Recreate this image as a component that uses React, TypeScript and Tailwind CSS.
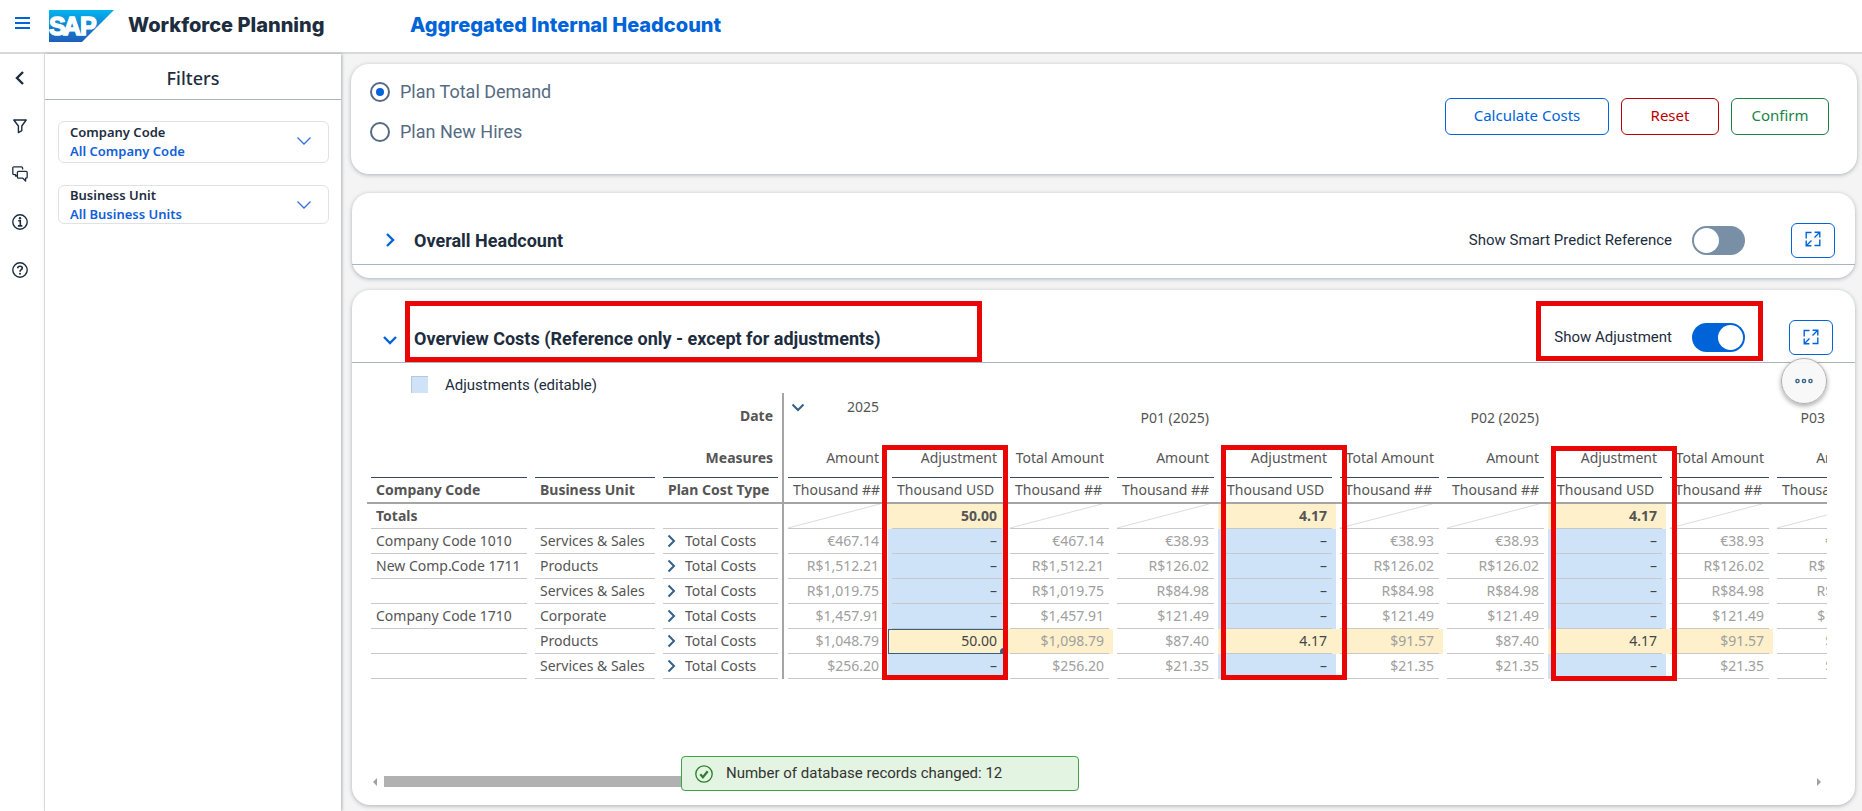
import React, { useState } from "react";

const ROBOTO = "font-[Roboto,'Liberation_Sans',sans-serif]";

type Tone = "none" | "blue" | "yellow" | "selected";

const periods = [
  { label: "2025", expandable: true },
  { label: "P01 (2025)", expandable: false },
  { label: "P02 (2025)", expandable: false },
  { label: "P03 (2025)", expandable: false },
];

const rows = [
  { company: "Company Code 1010", unit: "Services & Sales", year: ["€467.14", "–", "€467.14"], month: ["€38.93", "–", "€38.93"] },
  { company: "New Comp.Code 1711", unit: "Products", year: ["R$1,512.21", "–", "R$1,512.21"], month: ["R$126.02", "–", "R$126.02"] },
  { company: "", unit: "Services & Sales", year: ["R$1,019.75", "–", "R$1,019.75"], month: ["R$84.98", "–", "R$84.98"] },
  { company: "Company Code 1710", unit: "Corporate", year: ["$1,457.91", "–", "$1,457.91"], month: ["$121.49", "–", "$121.49"] },
  { company: "", unit: "Products", year: ["$1,048.79", "50.00", "$1,098.79"], month: ["$87.40", "4.17", "$91.57"], changed: true },
  { company: "", unit: "Services & Sales", year: ["$256.20", "–", "$256.20"], month: ["$21.35", "–", "$21.35"] },
];

const measures = [
  { name: "Amount", unit: "Thousand ##" },
  { name: "Adjustment", unit: "Thousand USD" },
  { name: "Total Amount", unit: "Thousand ##" },
];

// Every period shows three measures; the last one only shows its first.
const valueColumns = periods.flatMap((_, p) =>
  (p === 3 ? [0] : [0, 1, 2]).map((m) => ({ p, m })),
);

const colWidths = [
  "w-[164px]", "w-[128px]", "w-[123px]",
  "w-[106px]", "w-[118px]", "w-[107px]",
  "w-[105px]", "w-[118px]", "w-[107px]",
  "w-[105px]", "w-[118px]", "w-[107px]",
  "w-[105px]",
];

function Chevron({ className, d, width = 2 }: { className: string; d: string; width?: number }) {
  return (
    <svg viewBox="0 0 16 16" className={className} fill="none" stroke="currentColor" strokeWidth={width} aria-hidden="true">
      <path d={d} />
    </svg>
  );
}

function SapLogo() {
  return (
    <svg viewBox="0 0 65 32" className="h-8 w-[65px] shrink-0" role="img" aria-label="SAP">
      <defs>
        <linearGradient id="sap" x1="0" y1="0" x2="0" y2="1">
          <stop offset="0" stopColor="#00b4f0" />
          <stop offset="0.5" stopColor="#1482d0" />
          <stop offset="1" stopColor="#1e5fbb" />
        </linearGradient>
      </defs>
      <path d="M0 0H65L33 32H0Z" fill="url(#sap)" />
      <text x="0" y="25" fontFamily="Liberation Sans, sans-serif" fontWeight="700" fontSize="25" fill="#fff" stroke="#fff" strokeWidth="1.4">
        <tspan x="0">S</tspan>
        <tspan x="14">A</tspan>
        <tspan x="31">P</tspan>
      </text>
    </svg>
  );
}

function Rail() {
  const button = "flex size-6 items-center justify-center text-[#1d2d3e]";
  return (
    <nav className="flex w-[45px] shrink-0 flex-col items-center gap-6 border-r border-[#e2e4e6] bg-white pt-3 pr-1">
      <button className={button} aria-label="Collapse">
        <Chevron className="size-4" d="M11 2 5 8l6 6" width={2.4} />
      </button>
      <button className={button} aria-label="Filter">
        <svg viewBox="0 0 16 16" className="size-4" fill="none" stroke="currentColor" strokeWidth="1.4" strokeLinejoin="round">
          <path d="M1.8 2h12.4L9.8 8v4.6L6.4 14.6V8Z" />
        </svg>
      </button>
      <button className={button} aria-label="Comments">
        <svg viewBox="0 0 16 16" className="size-4" fill="none" stroke="currentColor" strokeWidth="1.3" strokeLinejoin="round">
          <path d="M3.6 10.4V8.6H2Q.8 8.600.8 7.400V2Q.8.8 2 .8H9.400Q10.600.8 10.600 2V3.400" />
          <path d="M3.600 10.600 5.200 9.300" />
          <path d="M6.600 5.400H14Q15.200 5.400 15.200 6.600V11Q15.200 12.200 14 12.200H13.600V15L10.800 12.200H6.600Q5.400 12.200 5.400 11V6.600Q5.400 5.400 6.600 5.400Z" />
        </svg>
      </button>
      <button className={button} aria-label="Information">
        <svg viewBox="0 0 16 16" className="size-4" fill="none" stroke="currentColor" strokeWidth="1.4">
          <circle cx="8" cy="8" r="7.200" />
          <path d="M6.200 6.800H8.300V11.600M5.900 11.900H10.300" strokeWidth="1.600" />
          <circle cx="8" cy="4.300" r="1.200" fill="currentColor" stroke="none" />
        </svg>
      </button>
      <button className={button} aria-label="Help">
        <svg viewBox="0 0 16 16" className="size-4" fill="none" stroke="currentColor" strokeWidth="1.4">
          <circle cx="8" cy="8" r="7.200" />
          <path d="M5.700 6.300Q5.700 4.200 8 4.200T10.300 6.100Q10.300 7.200 9 7.900Q8 8.500 8 9.700" strokeWidth="1.600" />
          <circle cx="8" cy="11.800" r="1" fill="currentColor" stroke="none" />
        </svg>
      </button>
    </nav>
  );
}

function FilterTile({ id, label, value, height }: { id: string; label: string; value: string; height: string }) {
  return (
    <div className={`relative flex flex-col justify-center rounded-md border border-[#e0e2e4] pl-[11px] text-[13px] leading-[19px] font-semibold ${height}`}>
      <label htmlFor={id} className="text-[#1d2d3e]">{label}</label>
      <select id={id} className="h-[19px] appearance-none bg-transparent leading-[19px] font-semibold text-[#1160d8] outline-none">
        <option>{value}</option>
      </select>
      <Chevron className="pointer-events-none absolute top-[11px] right-4 size-4 text-[#2f6fe0]" d="M1.500 4.500 8 11l6.500-6.500" width={1.3} />
    </div>
  );
}

function Toggle({ label, checked, onChange }: { label: string; checked: boolean; onChange: () => void }) {
  return (
    <label className={`flex cursor-pointer items-center gap-5 text-[15px] text-[#1d2d3e] ${ROBOTO}`}>
      {label}
      <input type="checkbox" role="switch" checked={checked} onChange={onChange} className="peer sr-only" />
      <span className="flex h-[29px] w-[53px] items-center rounded-full bg-[#788fa6] px-[2px] peer-checked:justify-end peer-checked:bg-[#0064d9]">
        <span className="size-[25px] rounded-full bg-white" />
      </span>
    </label>
  );
}

function ExpandButton() {
  return (
    <button aria-label="Full screen" className="flex h-[35px] w-11 items-center justify-center rounded-md border border-[#0064d9] bg-white pb-0.5 text-[#0064d9]">
      <svg viewBox="0 0 16 16" className="size-4" fill="none" stroke="currentColor" strokeWidth="1.4">
        <path d="M1.200 7.500V1.500H6.500M14.800 8.500v6H9.500" />
        <path d="M9.600 1.200h5.200v5.200M14.500 1.500 9.500 6.500M6.400 14.800H1.200V9.600M1.500 14.500l5-5" />
      </svg>
    </button>
  );
}

function Cell({ children, tone = "none", text, first }: {
  children?: React.ReactNode; tone?: Tone; text: string; first?: boolean;
}) {
  const fill = tone === "blue" ? "bg-[#cfe3f8]" : tone === "none" ? "" : "bg-[#fdf0cb]";
  return (
    <td className={`relative p-0 ${fill} ${first ? "border-l-2 border-[#a5a5a5]" : ""}`}>
      <div className={`mx-1 flex h-[25px] items-center justify-end border-b border-[#c8c8c8] px-[5px] ${text}`}>
        {children}
      </div>
      {tone === "selected" && (
        <>
          <span className="absolute inset-0 border border-[#346187]" />
          <span className="absolute -right-px -bottom-px size-[7px] rounded-full bg-[#346187]" />
        </>
      )}
    </td>
  );
}

function Diagonal() {
  return (
    <svg viewBox="0 0 97 24" preserveAspectRatio="none" className="absolute inset-x-1 top-0 h-6 w-[97px]" stroke="#dcdcdc" aria-hidden="true">
      <path d="M0 24 92 0" fill="none" />
    </svg>
  );
}

function CostTable() {
  const leftHead = "mx-1 flex h-[25px] items-center border-t border-[#3b4a5a] px-[5px]";
  const labelCell = "mx-1 flex h-[25px] items-center border-b border-[#c8c8c8] px-[5px]";
  return (
    <div className="relative mr-7 ml-[15px] overflow-hidden pb-1">
      <table className="w-[1511px] table-fixed border-separate border-spacing-0 text-sm leading-5 whitespace-nowrap text-[#555]">
        <colgroup>
          {colWidths.map((w, i) => <col key={i} className={w} />)}
        </colgroup>
        <thead>
          <tr className="h-[45px]">
            <th colSpan={3} className="p-0 pr-[9px] text-right">Date</th>
            {periods.map((period, p) => (
              <th key={p} className={`p-0 pr-[9px] text-right align-top font-normal ${p === 0 ? "border-l-2 border-[#a5a5a5]" : ""}`}>
                {period.expandable ? (
                  <div className="flex items-center justify-between pt-1 pl-1.5">
                    <button aria-label="Collapse 2025"><Chevron className="size-4 text-[#346187]" d="m2.500 5.500 5.500 5.500 5.500-5.500" /></button>
                    {period.label}
                  </div>
                ) : (
                  <div className="pt-[15px]">{period.label}</div>
                )}
              </th>
            )).flatMap((cell, p) => (p < 3 ? [cell, <td key={`gap${p}`} colSpan={2} />] : [cell]))}
          </tr>
          <tr className="h-[39px]">
            <th colSpan={3} className="p-0 pr-[9px] text-right">Measures</th>
            {valueColumns.map(({ p, m }, i) => (
              <th key={`${p}${m}`} className={`p-0 pr-[9px] text-right font-normal ${i === 0 ? "border-l-2 border-[#a5a5a5]" : ""}`}>{measures[m].name}</th>
            ))}
          </tr>
          <tr>
            {["Company Code", "Business Unit", "Plan Cost Type"].map((name) => (
              <th key={name} className="border-b-2 border-[#a5a5a5] p-0"><div className={leftHead}>{name}</div></th>
            ))}
            {valueColumns.map(({ p, m }, i) => (
              <th key={`${p}${m}`} className={`border-b-2 border-[#a5a5a5] p-0 font-normal ${i === 0 ? "border-l-2" : ""}`}>
                <div className={leftHead}>{measures[m].unit}</div>
              </th>
            ))}
          </tr>
        </thead>
        <tbody>
          <tr>
            {["Totals", "", ""].map((name, i) => (
              <td key={i} className="p-0"><div className={`${labelCell} font-bold`}>{name}</div></td>
            ))}
            {valueColumns.map(({ p, m }, i) => (
              <Cell key={`${p}${m}`} first={i === 0} tone={m === 1 ? "yellow" : "none"} text="font-bold">
                {m === 1 ? (p === 0 ? "50.00" : "4.17") : <Diagonal />}
              </Cell>
            ))}
          </tr>
          {rows.map((row, r) => (
            <tr key={r}>
              <td className="p-0"><div className={labelCell}>{row.company}</div></td>
              <td className="p-0"><div className={labelCell}>{row.unit}</div></td>
              <td className="p-0">
                <div className="mx-1 flex h-[25px] items-center gap-1.5 border-b border-[#c8c8c8]">
                  <button aria-label="Expand Total Costs"><Chevron className="size-4 text-[#346187]" d="m5.500 2.500 5.500 5.500-5.500 5.500" /></button>
                  Total Costs
                </div>
              </td>
              {valueColumns.map(({ p, m }, i) => {
                const tone: Tone = row.changed && m === 1 ? (p === 0 ? "selected" : "yellow") : row.changed && m === 2 ? "yellow" : m === 1 ? "blue" : "none";
                return (
                  <Cell key={`${p}${m}`} first={i === 0} tone={tone} text={m === 1 ? "text-[#444]" : "text-[#a0a0a0]"}>
                    {(p === 0 ? row.year : row.month)[m]}
                  </Cell>
                );
              })}
            </tr>
          ))}
        </tbody>
      </table>
      <span className="pointer-events-none absolute top-[52px] left-[515px] h-[235px] w-[126px] border-[5px] border-[#eb0606]" />
      <span className="pointer-events-none absolute top-[52px] left-[854px] h-[235px] w-[126px] border-[5px] border-[#eb0606]" />
      <span className="pointer-events-none absolute top-[53px] left-[1184px] h-[235px] w-[126px] border-[5px] border-[#eb0606]" />
    </div>
  );
}

export default function App() {
  const [plan, setPlan] = useState("demand");
  const [predict, setPredict] = useState(false);
  const [adjust, setAdjust] = useState(true);
  const card = "rounded-[18px] bg-white shadow-[0_1px_4px_rgba(34,53,72,0.35)]";
  const title = `text-lg font-bold text-[#1d2d3e] ${ROBOTO}`;
  const action = "h-[37px] rounded-md border bg-white pb-0.5 text-[15px]";

  return (
    <div className="flex min-h-screen flex-col bg-[#f4f4f4] font-['Noto_Sans','Open_Sans',sans-serif]">
      <header className="flex h-[54px] shrink-0 items-center border-b-2 border-[#d9d9d9] bg-white pl-[15px] font-[Inter,sans-serif] text-xl font-extrabold">
        <button aria-label="Menu" className="mr-[19px] mb-1.5 text-[#0064d9]">
          <svg viewBox="0 0 15 12" className="h-3 w-[15px]" stroke="currentColor" strokeWidth="2">
            <path d="M0 1h15M0 6h15M0 11h15" />
          </svg>
        </button>
        <SapLogo />
        <h1 className="mb-0.5 ml-[14px] w-[282px] text-[#1d2d3e]">Workforce Planning</h1>
        <h2 className="mb-0.5 text-[#0064d9]">Aggregated Internal Headcount</h2>
      </header>

      <div className="flex flex-1">
        <Rail />
        <aside className="z-10 w-[296px] shrink-0 bg-white shadow-[1px_0_3px_rgba(34,53,72,0.35)]">
          <h2 className="flex h-[46px] items-center justify-center border-b border-[#a9b4be] pt-0.5 text-lg font-medium text-[#1d2d3e]">Filters</h2>
          <div className="flex flex-col gap-[22px] pt-[21px] pr-3 pl-[13px]">
            <FilterTile id="company" label="Company Code" value="All Company Code" height="h-[42px]" />
            <FilterTile id="unit" label="Business Unit" value="All Business Units" height="h-[39px]" />
          </div>
        </aside>

        <main className="flex min-w-0 flex-1 flex-col pt-[10px] pr-[5px] pb-1.5 pl-[10px]">
          <section className={`${card} flex items-start justify-between pt-4 pr-7 pb-[30px] pl-[19px]`}>
            <div className={`flex flex-col gap-4 text-lg leading-6 text-[#556b82] ${ROBOTO}`}>
              {[["demand", "Plan Total Demand"], ["hires", "Plan New Hires"]].map(([key, label]) => (
                <label key={key} className="flex items-center gap-[10px]">
                  <input
                    type="radio"
                    name="plan"
                    checked={plan === key}
                    onChange={() => setPlan(key)}
                    className="flex size-5 appearance-none items-center justify-center rounded-full border-2 border-[#556b82] before:size-2 before:rounded-full checked:before:bg-[#0064d9]"
                  />
                  {label}
                </label>
              ))}
            </div>
            <div className="flex gap-3 pt-[18px]">
              <button className={`${action} w-[164px] border-[#0064d9] text-[#0064d9]`}>Calculate Costs</button>
              <button className={`${action} w-[98px] border-[#bb0000] text-[#bb0000]`}>Reset</button>
              <button className={`${action} w-[98px] border-[#188544] text-[#188544]`}>Confirm</button>
            </div>
          </section>

          <section className={`${card} mt-[19px] mr-0.5 ml-px pb-[13px]`}>
            <div className="flex h-[72px] items-center border-b border-[#a9b4be] pt-[23px] pr-5 pl-[30px]">
              <button aria-label="Expand" className="mr-4 text-[#0064d9]"><Chevron className="size-4" d="M5 2l6 6-6 6" width={2.4} /></button>
              <h3 className={`mr-auto pt-0.5 ${title}`}>Overall Headcount</h3>
              <Toggle label="Show Smart Predict Reference" checked={predict} onChange={() => setPredict(!predict)} />
              <div className="ml-[46px]"><ExpandButton /></div>
            </div>
          </section>

          <section className={`${card} relative mt-3 mr-0.5 ml-px flex flex-1 flex-col`}>
            <div className="relative flex h-[73px] items-center border-b border-[#a9b4be] pt-[23px] pr-[22px] pl-[30px]">
              <button aria-label="Collapse" className="mt-1 mr-4 text-[#0064d9]"><Chevron className="size-4" d="M2 5l6 6 6-6" width={2.4} /></button>
              <h3 className={`mr-auto pt-0.5 ${title}`}>Overview Costs (Reference only - except for adjustments)</h3>
              <Toggle label="Show Adjustment" checked={adjust} onChange={() => setAdjust(!adjust)} />
              <div className="ml-11"><ExpandButton /></div>
              <span className="pointer-events-none absolute top-[11px] left-[53px] h-[61px] w-[577px] border-[5px] border-[#eb0606]" />
              <span className="pointer-events-none absolute top-[11px] right-[92px] h-[60px] w-[227px] border-[5px] border-[#eb0606]" />
            </div>
            <button aria-label="More actions" className="absolute top-[68px] right-7 z-10 flex size-[46px] items-center justify-center rounded-full border border-[#b0b0b0] bg-[#f7f7f7]/90 text-[#346187] shadow-[0_2px_5px_rgba(0,0,0,0.35)]">
              <svg viewBox="0 0 18 6" className="h-1.5 w-[18px]" fill="none" stroke="currentColor" strokeWidth="1.4">
                <circle cx="2.500" cy="3" r="1.600" />
                <circle cx="9" cy="3" r="1.600" />
                <circle cx="15.500" cy="3" r="1.600" />
              </svg>
            </button>

            <div className={`flex h-[30px] items-end gap-[17px] pl-[59px] text-[15px] text-[#1d2d3e] ${ROBOTO}`}>
              <span className="size-[17px] border-t border-l border-[#b9c6d6] bg-[#cfe3f8]" />
              <span className="leading-[15px]">Adjustments (editable)</span>
            </div>

            <CostTable />

            <div className="mt-auto mr-[34px] mb-[18px] ml-[21px] flex h-[11px] items-center text-[#a0a0a0]">
              <svg viewBox="0 0 4 8" className="mr-[7px] h-2 w-1" fill="currentColor"><path d="M4 0v8L0 4Z" /></svg>
              <div className="h-[11px] w-[600px] bg-[#b1b1b1]" />
              <svg viewBox="0 0 4 8" className="ml-auto h-2 w-1" fill="currentColor"><path d="M0 0v8l4-4Z" /></svg>
            </div>

            <div role="status" className={`absolute bottom-[14px] left-[329px] flex h-[35px] w-[398px] items-center gap-[13px] rounded border border-[#3fa346] bg-[#e4f4e2] pl-[13px] text-[15px] text-[#333] ${ROBOTO}`}>
              <svg viewBox="0 0 18 18" className="size-[18px]" fill="none" stroke="#2b7d2b">
                <circle cx="9" cy="9" r="8.200" strokeWidth="1.300" />
                <path d="m5.300 9.300 2.600 2.900 4.800-6" strokeWidth="2.200" />
              </svg>
              Number of database records changed: 12
            </div>
          </section>
        </main>
      </div>
    </div>
  );
}
